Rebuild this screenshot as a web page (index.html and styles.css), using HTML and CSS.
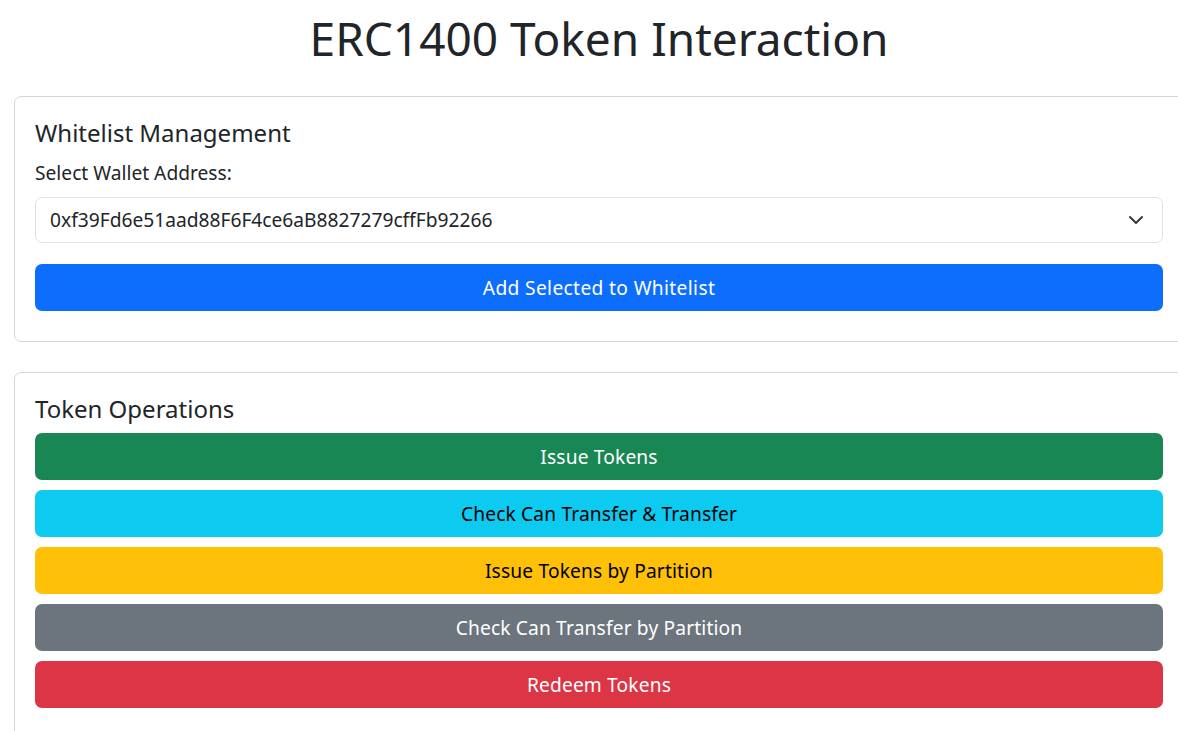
FILE: index.html
```html
<!DOCTYPE html>
<html lang="en">
<head>
<meta charset="utf-8">
<title>ERC1400 Token Interaction</title>
<link rel="stylesheet" href="styles.css">
</head>
<body>
<div class="page">
  <h1 class="title">ERC1400 Token Interaction</h1>

  <section class="card">
    <h5 class="card-title">Whitelist Management</h5>
    <label class="label" for="wallet">Select Wallet Address:</label>
    <div class="select" id="wallet">
      <span class="select-value">0xf39Fd6e51aad88F6F4ce6aB8827279cffFb92266</span>
      <svg class="chevron" width="16" height="16" viewBox="0 0 16 16" aria-hidden="true">
        <path d="M2 5l6 6 6-6" fill="none" stroke="#343a40" stroke-width="2" stroke-linecap="round" stroke-linejoin="round"/>
      </svg>
    </div>
    <button class="btn btn-primary">Add Selected to Whitelist</button>
  </section>

  <section class="card card-ops">
    <h5 class="card-title">Token Operations</h5>
    <div class="btn-stack">
      <button class="btn btn-success">Issue Tokens</button>
      <button class="btn btn-info">Check Can Transfer &amp; Transfer</button>
      <button class="btn btn-warning">Issue Tokens by Partition</button>
      <button class="btn btn-secondary">Check Can Transfer by Partition</button>
      <button class="btn btn-danger">Redeem Tokens</button>
    </div>
  </section>
</div>
</body>
</html>
```
FILE: styles.css
```css
html {
  overflow-x: hidden;
}
body {
  margin: 0;
  font-family: "Noto Sans", "Open Sans", sans-serif;
  font-size: 19.2px;
  color: #212529;
  background: #fff;
}
.page {
  width: 1170px;
  padding: 0 14px;
}
.title {
  margin: 0;
  padding-top: 11px;
  height: 96px;
  box-sizing: border-box;
  text-align: center;
  font-weight: 400;
  font-size: 46px;
  line-height: 1.2;
}
.card {
  border: 1px solid #d6d6d6;
  border-radius: 7px;
  padding: 22px 20px 30px 20px;
  margin-bottom: 30px;
}
.card-title {
  margin: 0 0 11px 0;
  font-size: 24px;
  font-weight: 400;
  line-height: 28.8px;
}
.label {
  display: block;
  line-height: 28.8px;
  margin-bottom: 9px;
}
.select {
  height: 46px;
  box-sizing: border-box;
  border: 1px solid #dee2e6;
  border-radius: 7px;
  display: flex;
  align-items: center;
  justify-content: space-between;
  padding: 0 18px 0 14px;
  margin-bottom: 21px;
}
.chevron {
  display: block;
}
.btn {
  display: block;
  width: 100%;
  height: 47px;
  border: 0;
  border-radius: 7px;
  font-family: inherit;
  font-size: 19.2px;
  letter-spacing: 0.15px;
  color: #fff;
  text-align: center;
}
.btn-stack {
  display: flex;
  flex-direction: column;
  gap: 10px;
}
.card-ops .card-title {
  margin-bottom: 10px;
}
.btn-primary { background: #0d6efd; letter-spacing: 0.35px; }
.btn-success { background: #198754; }
.btn-info { background: #0dcaf0; color: #000; }
.btn-warning { background: #ffc107; color: #000; }
.btn-secondary { background: #6c757d; }
.btn-danger { background: #dc3545; }
```
